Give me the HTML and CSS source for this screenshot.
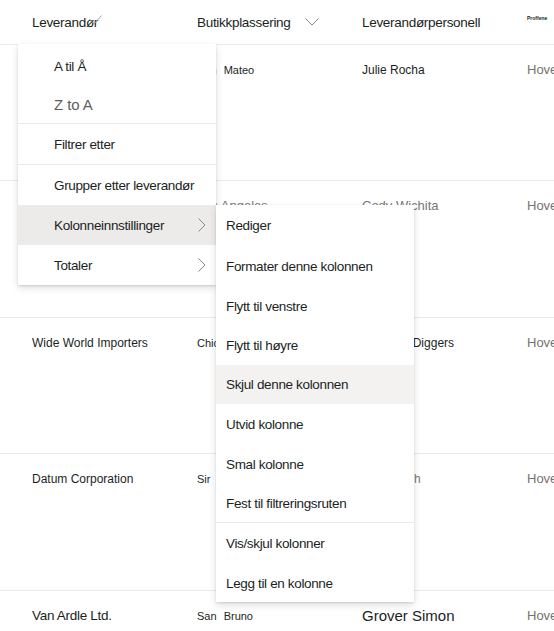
FILE: index.html
```html
<!DOCTYPE html>
<html lang="no">
<head>
<meta charset="utf-8">
<title>Leverandører</title>
<link rel="stylesheet" href="styles.css">
</head>
<body>
<div class="page">
  <div class="head">
    <div class="hcell"><span>Leverandør</span><svg class="sortmark" viewBox="0 0 13 10" width="13" height="10"><polyline points="0.5,4 5,9 12.5,0.5" fill="none" stroke="#a19f9d" stroke-width="1"/></svg></div>
    <div class="hcell"><span>Butikkplassering</span><svg class="chev-down" viewBox="0 0 14 8" width="14" height="8"><polyline points="0.5,0.5 7,7 13.5,0.5" fill="none" stroke="#8a8886" stroke-width="1"/></svg></div>
    <div class="hcell"><span>Leverandørpersonell</span></div>
    <div class="hcell tiny"><span>Proffene</span></div>
  </div>

  <div class="row">
    <div class="cell"></div>
    <div class="cell city">San Mateo</div>
    <div class="cell">Julie Rocha</div>
    <div class="cell hove">Hovedkontor</div>
  </div>
  <div class="row">
    <div class="cell"></div>
    <div class="cell muted">Los Angeles</div>
    <div class="cell muted">Cody Wichita</div>
    <div class="cell hove">Hovedkontor</div>
  </div>
  <div class="row">
    <div class="cell">Wide World Importers</div>
    <div class="cell city">Chicago</div>
    <div class="cell">Kathleen Diggers</div>
    <div class="cell hove">Hovedkontor</div>
  </div>
  <div class="row">
    <div class="cell">Datum Corporation</div>
    <div class="cell city">Sir&nbsp;Ives</div>
    <div class="cell muted-sm">Anne Bach</div>
    <div class="cell hove">Hovedkontor</div>
  </div>
  <div class="row">
    <div class="cell mid">Van Ardle Ltd.</div>
    <div class="cell city">San Bruno</div>
    <div class="cell big">Grover Simon</div>
    <div class="cell hove">Hovedkontor</div>
  </div>

  <div class="menu menu-main">
    <div class="item">A til Å</div>
    <div class="item h37 disabled large">Z to A</div>
    <div class="sep"></div>
    <div class="item">Filtrer etter</div>
    <div class="sep"></div>
    <div class="item">Grupper etter leverandør</div>
    <div class="item active"><span>Kolonneinnstillinger</span><svg class="chev-right" viewBox="0 0 8 14" width="8" height="14"><polyline points="0.5,0.5 7,7 0.5,13.5" fill="none" stroke="#8a8886" stroke-width="1"/></svg></div>
    <div class="item"><span>Totaler</span><svg class="chev-right" viewBox="0 0 8 14" width="8" height="14"><polyline points="0.5,0.5 7,7 0.5,13.5" fill="none" stroke="#8a8886" stroke-width="1"/></svg></div>
  </div>

  <div class="menu menu-sub">
    <div class="item h41">Rediger</div>
    <div class="item">Formater denne kolonnen</div>
    <div class="item">Flytt til venstre</div>
    <div class="item h39">Flytt til høyre</div>
    <div class="item h39 hover">Skjul denne kolonnen</div>
    <div class="item">Utvid kolonne</div>
    <div class="item">Smal kolonne</div>
    <div class="item h38">Fest til filtreringsruten</div>
    <div class="sep"></div>
    <div class="item h41">Vis/skjul kolonner</div>
    <div class="item h38">Legg til en kolonne</div>
  </div>
</div>
</body>
</html>
```

FILE: styles.css
```css
* {
  box-sizing: border-box;
}

html,
body {
  margin: 0;
  padding: 0;
  background: #ffffff;
}

body {
  font-family: "Liberation Sans", Arial, sans-serif;
  color: #201f1e;
}

.page {
  position: relative;
  width: 554px;
  height: 631px;
  overflow: hidden;
}

.head,
.row {
  display: grid;
  grid-template-columns: 165px 165px 165px 165px;
  padding-left: 32px;
  border-bottom: 1px solid #edebe9;
}

.head {
  height: 45px;
  align-items: center;
  font-size: 13.5px;
  letter-spacing: -0.3px;
  color: #201f1e;
}

.hcell {
  display: flex;
  align-items: center;
  white-space: nowrap;
}

.sortmark {
  margin-left: -9px;
  margin-top: -4px;
  flex: none;
}

.chev-down {
  margin-left: 14px;
  margin-top: -1px;
  flex: none;
}

.tiny {
  align-self: start;
  margin-top: 15px;
  font-size: 5px;
  font-weight: bold;
  letter-spacing: 0;
}

.row {
  height: 136px;
  padding-top: 17px;
  align-items: start;
  font-size: 12px;
  line-height: 16px;
}

.row:nth-child(odd) {
  height: 137px;
}

.cell {
  white-space: nowrap;
  overflow: hidden;
}

.city {
  font-size: 11px;
  word-spacing: 4px;
}

.muted {
  color: #797775;
  font-size: 13px;
}

.muted-sm {
  color: #797775;
}

.hove {
  color: #737373;
  font-size: 13px;
}

.mid {
  font-size: 13.5px;
  letter-spacing: -0.3px;
}

.big {
  font-size: 15px;
}

.menu {
  position: absolute;
  width: 198px;
  background: #ffffff;
  box-shadow: 0 3.2px 7.2px 0 rgba(0, 0, 0, 0.132), 0 0.6px 1.8px 0 rgba(0, 0, 0, 0.108);
  font-size: 13.5px;
  letter-spacing: -0.35px;
  color: #201f1e;
}

.menu-main {
  left: 18px;
  top: 44px;
  padding-top: 2px;
}

.menu-sub {
  left: 216px;
  top: 205px;
}

.item {
  display: flex;
  align-items: center;
  justify-content: space-between;
  height: 40px;
  padding-right: 10px;
  white-space: nowrap;
}

.menu-main .item {
  padding-left: 36px;
}

.menu-sub .item {
  padding-left: 10px;
}

.item.h37 {
  height: 37px;
}

.item.h38 {
  height: 38px;
}

.item.h39 {
  height: 39px;
}

.item.h41 {
  height: 41px;
}

.item.large {
  font-size: 15px;
  letter-spacing: -0.1px;
}

.chev-right {
  flex: none;
}

.sep {
  height: 1px;
  background: #edebe9;
}

.active {
  background: #edebe9;
}

.hover {
  background: #f3f2f1;
}

.disabled {
  color: #605e5c;
}
```
